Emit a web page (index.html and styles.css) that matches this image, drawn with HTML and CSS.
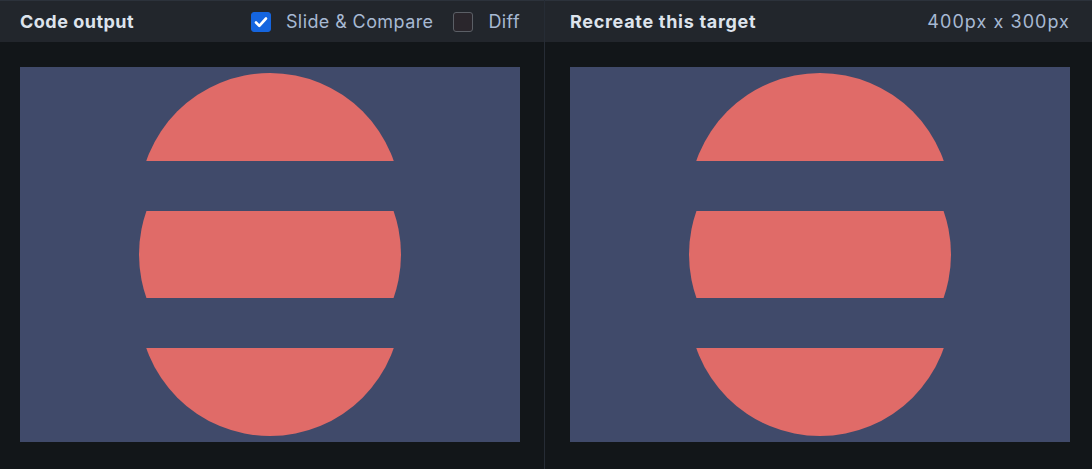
FILE: index.html
```html
<!DOCTYPE html>
<html>
<head>
<meta charset="utf-8">
<link rel="stylesheet" href="styles.css">
</head>
<body>
<div class="app">
  <section class="pane pane-left">
    <header class="bar">
      <h2 class="title">Code output</h2>
      <div class="controls">
        <label class="check"><span class="box on"><svg viewBox="0 0 20 20" width="20" height="20"><path d="M5 10.5l3.3 3.3L15 6.5" fill="none" stroke="#fff" stroke-width="2.6" stroke-linecap="round" stroke-linejoin="round"/></svg></span><span class="lbl">Slide &amp; Compare</span></label>
        <label class="check"><span class="box"></span><span class="lbl">Diff</span></label>
      </div>
    </header>
    <div class="stage">
      <svg class="art" viewBox="0 0 500 375" width="500" height="375">
        <defs>
          <clipPath id="a1"><rect x="0" y="6" width="500" height="88"/></clipPath>
          <clipPath id="a2"><rect x="0" y="144" width="500" height="87"/></clipPath>
          <clipPath id="a3"><rect x="0" y="281" width="500" height="88"/></clipPath>
        </defs>
        <rect width="500" height="375" fill="#404a6a"/>
        <circle cx="250" cy="137" r="131" fill="#e06b68" clip-path="url(#a1)"/>
        <circle cx="250" cy="187.5" r="131" fill="#e06b68" clip-path="url(#a2)"/>
        <circle cx="250" cy="238" r="131" fill="#e06b68" clip-path="url(#a3)"/>
      </svg>
    </div>
  </section>
  <section class="pane pane-right">
    <header class="bar">
      <h2 class="title">Recreate this target</h2>
      <span class="dims">400px x 300px</span>
    </header>
    <div class="stage">
      <svg class="art" viewBox="0 0 500 375" width="500" height="375">
        <defs>
          <clipPath id="b1"><rect x="0" y="6" width="500" height="88"/></clipPath>
          <clipPath id="b2"><rect x="0" y="144" width="500" height="87"/></clipPath>
          <clipPath id="b3"><rect x="0" y="281" width="500" height="88"/></clipPath>
        </defs>
        <rect width="500" height="375" fill="#404a6a"/>
        <circle cx="250" cy="137" r="131" fill="#e06b68" clip-path="url(#b1)"/>
        <circle cx="250" cy="187.5" r="131" fill="#e06b68" clip-path="url(#b2)"/>
        <circle cx="250" cy="238" r="131" fill="#e06b68" clip-path="url(#b3)"/>
      </svg>
    </div>
  </section>
</div>
</body>
</html>
```
FILE: styles.css
```css
* { box-sizing: border-box; }
html, body { margin: 0; padding: 0; }
body {
  background: #121619;
  font-family: Inter, "Noto Sans", sans-serif;
  width: 1092px;
  height: 469px;
  overflow: hidden;
}
.app {
  display: flex;
  height: 469px;
}
.pane {
  display: flex;
  flex-direction: column;
}
.pane-left {
  width: 545px;
  border-right: 1px solid #262c35;
}
.pane-right {
  flex: 1;
}
.bar {
  height: 42px;
  background: #22262c;
  border-top: 1px solid #2c323b;
  display: flex;
  align-items: center;
  justify-content: space-between;
  padding: 0 20px;
}
.pane-left .bar { padding-right: 24px; }
.pane-right .bar { padding-right: 22px; padding-left: 25px; }
.title {
  margin: 0;
  font-size: 18px;
  font-weight: 700;
  color: #dde3ec;
  letter-spacing: 0.5px;
}
.pane-right .title { letter-spacing: 0.7px; }
.controls {
  display: flex;
  align-items: center;
  gap: 20px;
}
.check {
  display: flex;
  align-items: center;
  gap: 15px;
}
.box {
  width: 20px;
  height: 20px;
  border-radius: 3px;
  border: 1px solid #5b5f66;
  background: #2a262c;
  display: block;
}
.box.on {
  background: #1565df;
  border-color: #1565df;
}
.box svg { display: block; margin: -1px; }
.lbl, .dims {
  font-size: 18px;
  color: #a7b9d3;
  letter-spacing: 0.4px;
}
.dims { letter-spacing: 1.05px; }
.stage {
  padding: 25px 20px 0;
}
.pane-right .stage { padding-left: 25px; }
.art { display: block; }
```
